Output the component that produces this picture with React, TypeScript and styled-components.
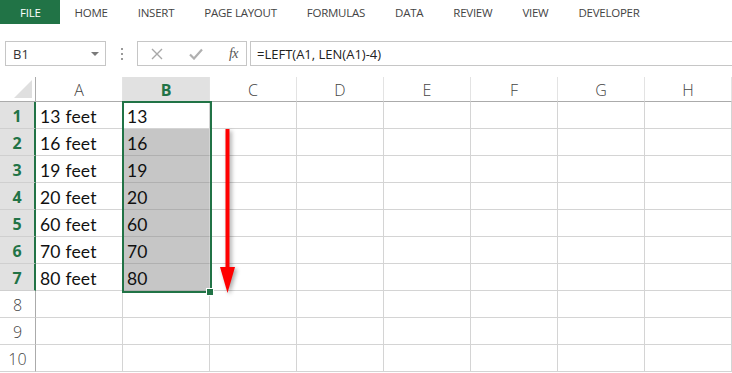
import React from "react"
import styled, { createGlobalStyle } from "styled-components"

const GREEN = "#217346"

const GlobalStyle = createGlobalStyle`
  html, body {
    margin: 0;
    padding: 0;
    background: #ffffff;
  }
  body {
    font-family: "Open Sans", "Liberation Sans", sans-serif;
    width: 732px;
    height: 373px;
    overflow: hidden;
  }
`

const Page = styled.div`
  width: 732px;
  height: 373px;
  display: flex;
  flex-direction: column;
  background: #ffffff;
`

// ribbon tabs
const TabBar = styled.div`
  display: flex;
  align-items: stretch;
  height: 24px;
`

type TabProps = { $file?: boolean }

const Tab = styled.div<TabProps>`
  display: flex;
  align-items: center;
  padding: ${(p) => (p.$file ? "0 19px 0 20px" : "0 15px")};
  font-size: 11.5px;
  letter-spacing: -0.25px;
  color: ${(p) => (p.$file ? "#ffffff" : "#444444")};
  background: ${(p) => (p.$file ? GREEN : "transparent")};
`

// formula bar
const FormulaBar = styled.div`
  display: flex;
  align-items: center;
  height: 25px;
  margin-top: 17px;
  padding-left: 5px;
`

const NameBox = styled.div`
  box-sizing: border-box;
  width: 101px;
  height: 25px;
  border: 1px solid #c6c6c6;
  display: flex;
  align-items: center;
  justify-content: space-between;
  padding: 0 6px 0 7px;
  font-size: 13px;
  color: #333333;
`

const DropCaret = styled.span`
  width: 0;
  height: 0;
  border-left: 4px solid transparent;
  border-right: 4px solid transparent;
  border-top: 4px solid #7a7a7a;
`

const Grip = styled.div`
  width: 31px;
  display: flex;
  flex-direction: column;
  align-items: center;
  gap: 3px;
  span {
    width: 2px;
    height: 2px;
    background: #9a9a9a;
  }
`

const ButtonBox = styled.div`
  box-sizing: border-box;
  width: 110px;
  height: 25px;
  border: 1px solid #c6c6c6;
  display: flex;
  align-items: center;
  padding: 0 8px 0 13px;
  justify-content: space-between;
`

const FxLabel = styled.span`
  font-family: "Liberation Serif", "DejaVu Serif", serif;
  font-style: italic;
  font-size: 14px;
  color: #555555;
  letter-spacing: -0.5px;
`

const FormulaInput = styled.div`
  box-sizing: border-box;
  flex: 1;
  height: 25px;
  margin-left: 3px;
  border-top: 1px solid #c6c6c6;
  border-bottom: 1px solid #c6c6c6;
  border-left: 1px solid #c6c6c6;
  display: flex;
  align-items: center;
  padding-left: 6px;
  font-size: 13px;
  color: #222222;
`

// sheet grid
const Sheet = styled.div`
  position: relative;
  margin-top: 11px;
  display: grid;
  grid-template-columns: 36px repeat(8, 87px);
  grid-template-rows: 25px repeat(10, 27px);
`

const Corner = styled.div`
  box-sizing: border-box;
  position: relative;
  border-bottom: 1px solid #ababab;
  border-right: 1px solid #ababab;
  &::after {
    content: "";
    position: absolute;
    right: 3px;
    bottom: 3px;
    width: 0;
    height: 0;
    border-left: 18px solid transparent;
    border-bottom: 18px solid #dfdfdf;
  }
`

type HeadProps = { $active?: boolean }

const ColHead = styled.div<HeadProps>`
  box-sizing: border-box;
  display: flex;
  align-items: center;
  justify-content: center;
  border-bottom: 1px solid #ababab;
  border-right: 1px solid #e3e3e3;
  background: ${(p) => (p.$active ? "#e1e1e1" : "#ffffff")};
  color: ${(p) => (p.$active ? GREEN : "#444444")};
  font-weight: ${(p) => (p.$active ? 700 : 300)};
  font-size: 16px;
  padding-top: 2px;
`

const RowHead = styled.div<HeadProps>`
  box-sizing: border-box;
  display: flex;
  align-items: center;
  justify-content: center;
  border-bottom: 1px solid ${(p) => (p.$active ? "#cfcfcf" : "#d4d4d4")};
  border-right: ${(p) => (p.$active ? `2px solid ${GREEN}` : "1px solid #ababab")};
  background: ${(p) => (p.$active ? "#e1e1e1" : "#ffffff")};
  color: ${(p) => (p.$active ? GREEN : "#444444")};
  font-weight: ${(p) => (p.$active ? 700 : 300)};
  font-size: 16px;
  padding-top: 2px;
`

type CellProps = { $filled?: boolean }

const Cell = styled.div<CellProps>`
  box-sizing: border-box;
  display: flex;
  align-items: center;
  padding: 3px 0 0 4px;
  border-right: 1px solid #d4d4d4;
  border-bottom: 1px solid ${(p) => (p.$filled ? "#b0b0b0" : "#d4d4d4")};
  background: ${(p) => (p.$filled ? "#c6c6c6" : "#ffffff")};
  font-family: Lato, "Open Sans", sans-serif;
  font-size: 17.5px;
  letter-spacing: 0.2px;
  color: #111111;
  white-space: nowrap;
`

const Selection = styled.div`
  position: absolute;
  left: 122px;
  top: 24px;
  width: 90px;
  height: 192px;
  box-sizing: border-box;
  border: 2px solid ${GREEN};
  pointer-events: none;
`

const FillHandle = styled.div`
  position: absolute;
  left: 206px;
  top: 211px;
  width: 6px;
  height: 6px;
  background: ${GREEN};
  border: 1px solid #ffffff;
`

const Arrow = styled.svg`
  position: absolute;
  left: 216px;
  top: 48px;
  overflow: visible;
  filter: drop-shadow(2px 2px 2px rgba(0, 0, 0, 0.35));
`

const columns = ["A", "B", "C", "D", "E", "F", "G", "H"]
const values = [13, 16, 19, 20, 60, 70, 80]

export default function App() {
  const rows = Array.from({ length: 10 }, (_, i) => i + 1)

  return (
    <Page>
      <GlobalStyle />
      <TabBar>
        <Tab $file>FILE</Tab>
        <Tab>HOME</Tab>
        <Tab>INSERT</Tab>
        <Tab>PAGE LAYOUT</Tab>
        <Tab>FORMULAS</Tab>
        <Tab>DATA</Tab>
        <Tab>REVIEW</Tab>
        <Tab>VIEW</Tab>
        <Tab>DEVELOPER</Tab>
      </TabBar>

      <FormulaBar>
        <NameBox>
          B1
          <DropCaret />
        </NameBox>
        <Grip>
          <span />
          <span />
          <span />
        </Grip>
        <ButtonBox>
          <svg width="12" height="12" viewBox="0 0 12 12">
            <path d="M1 1 L11 11 M11 1 L1 11" stroke="#a8a8a8" strokeWidth="1.4" />
          </svg>
          <svg width="14" height="12" viewBox="0 0 14 12">
            <path d="M1 6.5 L5 10.5 L13 1.5" stroke="#b0b0b0" strokeWidth="2.2" fill="none" />
          </svg>
          <FxLabel>fx</FxLabel>
        </ButtonBox>
        <FormulaInput>=LEFT(A1, LEN(A1)-4)</FormulaInput>
      </FormulaBar>

      <Sheet>
        <Corner />
        {columns.map((c) => (
          <ColHead key={c} $active={c === "B"}>
            {c}
          </ColHead>
        ))}
        {rows.map((r) => {
          const v = values[r - 1]
          const active = r <= 7
          return (
            <React.Fragment key={r}>
              <RowHead $active={active}>{r}</RowHead>
              <Cell>{v !== undefined ? `${v} feet` : ""}</Cell>
              <Cell $filled={active && r > 1}>{v !== undefined ? v : ""}</Cell>
              {columns.slice(2).map((c) => (
                <Cell key={c} />
              ))}
            </React.Fragment>
          )
        })}
        <Selection />
        <FillHandle />
        <Arrow width="24" height="170" viewBox="0 0 24 170">
          <rect x="9.5" y="4" width="4" height="144" fill="#ff0000" />
          <polygon points="4,142 19,142 11.5,168" fill="#ff0000" />
        </Arrow>
      </Sheet>
    </Page>
  )
}
